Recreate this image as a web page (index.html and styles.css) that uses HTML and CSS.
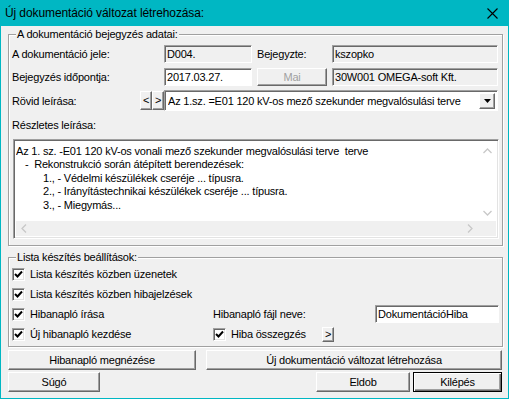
FILE: index.html
```html
<!DOCTYPE html>
<html lang="hu">
<head>
    <meta charset="UTF-8">
    <meta name="viewport" content="width=device-width, initial-scale=1.0">
    <title>Új dokumentáció változat létrehozása</title>
    <link rel="stylesheet" href="styles.css">
</head>
<body>
<div class="window">
    <div class="titlebar">
        <span class="title">Új dokumentáció változat létrehozása:</span>
        <svg class="close" width="11" height="11" viewBox="0 0 11 11">
            <path d="M0.5 0.5 L10.5 10.5 M10.5 0.5 L0.5 10.5" stroke="#000" stroke-width="1.1" fill="none"/>
        </svg>
    </div>

    <div class="client">
        <fieldset class="group group-doc">
            <legend>A dokumentáció bejegyzés adatai:</legend>

            <div class="row">
                <span class="label w152">A dokumentáció jele:</span>
                <span class="field readonly w88">D004.</span>
                <span class="gap"></span>
                <span class="label w75">Bejegyzte:</span>
                <span class="field readonly w166">kszopko</span>
            </div>

            <div class="row row2">
                <span class="label w152">Bejegyzés időpontja:</span>
                <span class="field w88">2017.03.27.</span>
                <span class="gap"></span>
                <button class="btn disabled w70">Mai</button>
                <span class="gap"></span>
                <span class="field readonly w166">30W001 OMEGA-soft Kft.</span>
            </div>

            <div class="row row3">
                <span class="label w128">Rövid leírása:</span>
                <button class="btn nav">&lt;</button>
                <button class="btn nav">&gt;</button>
                <span class="combo">
                    <span class="combo-text">Az 1.sz. =E01 120 kV-os mező szekunder megvalósulási terve</span>
                    <span class="btn combo-btn">
                        <svg width="7" height="4" viewBox="0 0 7 4"><path d="M0 0 H7 L3.5 4 Z" fill="#000"/></svg>
                    </span>
                </span>
            </div>

            <div class="memo-label">Részletes leírása:</div>
            <div class="memo">
                <div class="memo-text">
                    <div>Az 1. sz. -E01 120 kV-os vonali mező szekunder megvalósulási terve&nbsp; terve</div>
                    <div class="ind1">-&nbsp; Rekonstrukció során átépített berendezések:</div>
                    <div class="ind2">1., - Védelmi készülékek cseréje ... típusra.</div>
                    <div class="ind2">2., - Irányítástechnikai készülékek cseréje ... típusra.</div>
                    <div class="ind2">3., - Miegymás...</div>
                </div>
                <div class="vscroll">
                    <svg width="9" height="6" viewBox="0 0 9 6"><path d="M0.5 5 L4.5 1 L8.5 5" stroke="#c8c8c8" stroke-width="1.3" fill="none"/></svg>
                    <svg width="9" height="6" viewBox="0 0 9 6"><path d="M0.5 1 L4.5 5 L8.5 1" stroke="#c8c8c8" stroke-width="1.3" fill="none"/></svg>
                </div>
                <div class="hscroll">
                    <svg width="6" height="9" viewBox="0 0 6 9"><path d="M5 0.5 L1 4.5 L5 8.5" stroke="#c8c8c8" stroke-width="1.3" fill="none"/></svg>
                    <svg width="6" height="9" viewBox="0 0 6 9"><path d="M1 0.5 L5 4.5 L1 8.5" stroke="#c8c8c8" stroke-width="1.3" fill="none"/></svg>
                </div>
                <div class="corner"></div>
            </div>
        </fieldset>

        <fieldset class="group group-list">
            <legend>Lista készítés beállítások:</legend>
            <div class="opts">
                <label class="check"><span class="box"><svg width="9" height="9" viewBox="0 0 9 9"><path d="M1 4 L3.5 6.5 L8 1.5" stroke="#000" stroke-width="2" fill="none"/></svg></span>Lista készítés közben üzenetek</label>
                <span></span>
                <label class="check"><span class="box"><svg width="9" height="9" viewBox="0 0 9 9"><path d="M1 4 L3.5 6.5 L8 1.5" stroke="#000" stroke-width="2" fill="none"/></svg></span>Lista készítés közben hibajelzések</label>
                <span></span>
                <label class="check"><span class="box"><svg width="9" height="9" viewBox="0 0 9 9"><path d="M1 4 L3.5 6.5 L8 1.5" stroke="#000" stroke-width="2" fill="none"/></svg></span>Hibanapló írása</label>
                <div class="logname">
                    <span>Hibanapló fájl neve:</span>
                    <span class="field w124">DokumentációHiba</span>
                </div>
                <label class="check"><span class="box"><svg width="9" height="9" viewBox="0 0 9 9"><path d="M1 4 L3.5 6.5 L8 1.5" stroke="#000" stroke-width="2" fill="none"/></svg></span>Új hibanapló kezdése</label>
                <div class="summary">
                    <label class="check w109"><span class="box"><svg width="9" height="9" viewBox="0 0 9 9"><path d="M1 4 L3.5 6.5 L8 1.5" stroke="#000" stroke-width="2" fill="none"/></svg></span>Hiba összegzés</label>
                    <button class="btn small">&gt;</button>
                </div>
            </div>
        </fieldset>

        <div class="actions">
            <button class="btn w188">Hibanapló megnézése</button>
            <button class="btn grow">Új dokumentáció változat létrehozása</button>
        </div>
        <div class="actions bottom">
            <button class="btn w92">Súgó</button>
            <span class="spacer"></span>
            <button class="btn w94">Eldob</button>
            <button class="btn default w89">Kilépés</button>
        </div>
    </div>
</div>
</body>
</html>
```

FILE: styles.css
```css
body {
    margin: 0;
    font-family: "Liberation Sans", Arial, sans-serif;
    font-size: 11px;
    letter-spacing: -0.2px;
    color: #000;
    background: #f0f0f0;
}
.window {
    width: 509px;
    height: 399px;
    box-sizing: border-box;
    border: 1px solid #00b7c3;
    border-top: 0;
    background: #f0f0f0;
    display: flex;
    flex-direction: column;
}
.titlebar {
    height: 26px;
    margin: 0 -1px;
    background: #00b7c3;
    display: flex;
    align-items: center;
    justify-content: space-between;
    padding: 0 11px 0 5px;
}
.title {
    font-size: 12px;
    letter-spacing: -0.1px;
}
.close {
    display: block;
}
.client {
    padding: 2px 5px 0 7px;
}

/* group boxes */
.group {
    margin: 0;
    min-width: 0;
    border: 1px solid #a0a0a0;
    box-shadow: inset 1px 1px #fff, 1px 1px #fff;
}
.group legend {
    padding: 0 1px;
    margin-left: 4px;
    background: #f0f0f0;
    line-height: 13px;
}
.group-doc {
    padding: 4px 3px 6px 3px;
}
.group-list {
    margin-top: 5px;
    padding: 0 3px 2px 3px;
}

.row {
    display: flex;
    align-items: center;
    height: 18px;
}
.row2 {
    margin-top: 5px;
}
.row3 {
    margin-top: 4px;
    height: 21px;
}
.label {
    flex: none;
}
.gap {
    width: 5px;
    flex: none;
}
.w152 { width: 152px; }
.w128 { width: 128px; }
.w75 { width: 75px; }
.w88 { width: 88px; }
.w166 { width: 166px; }
.w70 { width: 70px; }
.w124 { width: 124px; }
.w109 { width: 109px; }
.w188 { width: 188px; }
.w92 { width: 92px; }
.w94 { width: 94px; }
.w89 { width: 89px; }

.field {
    flex: none;
    box-sizing: border-box;
    height: 18px;
    padding: 1px 2px 0 2px;
    background: #fff;
    border: 1px solid;
    border-color: #a0a0a0 #fff #fff #a0a0a0;
    box-shadow: inset 1px 1px #696969;
    line-height: 15px;
    white-space: nowrap;
    overflow: hidden;
}
.field.readonly {
    background: #f0f0f0;
}

.btn {
    box-sizing: border-box;
    height: 20px;
    padding: 0;
    font: inherit;
    letter-spacing: inherit;
    color: #000;
    background: #f0f0f0;
    border: 1px solid;
    border-color: #fff #696969 #696969 #fff;
    box-shadow: inset -1px -1px #a0a0a0;
    flex: none;
}
.btn.disabled {
    height: 18px;
    color: #a0a0a0;
}
.btn.default {
    border: 1px solid #000;
    box-shadow: inset 1px 1px #fff, inset -1px -1px #696969, inset -2px -2px #a0a0a0;
}
.btn.nav {
    width: 12px;
    height: 19px;
    line-height: 15px;
}
.btn.small {
    width: 12px;
    height: 15px;
    line-height: 11px;
}

.combo {
    flex: none;
    width: 334px;
    height: 21px;
    box-sizing: border-box;
    background: #fff;
    border: 1px solid;
    border-color: #a0a0a0 #fff #fff #a0a0a0;
    box-shadow: inset 1px 1px #696969;
    display: flex;
    align-items: center;
    padding: 0 2px 0 3px;
}
.combo-text {
    flex: 1;
    white-space: nowrap;
    overflow: hidden;
}
.combo-btn {
    width: 16px;
    height: 16px;
    display: flex;
    align-items: center;
    justify-content: center;
}

.memo-label {
    margin-top: 8px;
    line-height: 13px;
}
.memo {
    margin: 7px 0 0 1px;
    height: 100px;
    box-sizing: border-box;
    border: 1px solid;
    border-color: #a0a0a0 #fff #fff #a0a0a0;
    box-shadow: inset 1px 1px #696969, inset -1px -1px #e3e3e3;
    padding: 2px;
    display: grid;
    grid-template-columns: 1fr 17px;
    grid-template-rows: 1fr 15px;
    background: #fff;
}
.memo-text {
    padding: 3px 0 0 0;
    line-height: 13.4px;
    white-space: nowrap;
    overflow: hidden;
}
.ind1 {
    padding-left: 9px;
}
.ind2 {
    padding-left: 27px;
}
.vscroll {
    background: #fff;
    display: flex;
    flex-direction: column;
    justify-content: space-between;
    align-items: center;
    padding: 6px 0 5px;
}
.hscroll {
    background: #f0f0f0;
    display: flex;
    justify-content: space-between;
    align-items: center;
    padding: 0 6px 0 5px;
}
.corner {
    background: #f0f0f0;
}

/* checkbox options */
.opts {
    display: grid;
    grid-template-columns: 201px 1fr;
    grid-auto-rows: 20px;
    align-items: center;
}
.check {
    display: flex;
    align-items: center;
    gap: 5px;
}
.box {
    width: 13px;
    height: 13px;
    box-sizing: border-box;
    background: #fff;
    border: 1px solid;
    border-color: #a0a0a0 #fff #fff #a0a0a0;
    box-shadow: inset 1px 1px #696969, inset -1px -1px #e3e3e3;
    display: flex;
    align-items: center;
    justify-content: center;
    flex: none;
}
.box svg {
    display: block;
}
.logname {
    display: flex;
    align-items: center;
    justify-content: space-between;
}
.summary {
    display: flex;
    align-items: center;
}

/* button rows */
.actions {
    display: flex;
    gap: 10px;
    margin-top: 3px;
}
.actions .grow {
    flex: 1;
    margin-right: 1px;
}
.actions.bottom {
    gap: 3px;
    margin-top: 2px;
}
.spacer {
    flex: 1;
}
.bottom .default {
    margin-right: 1px;
}
```
